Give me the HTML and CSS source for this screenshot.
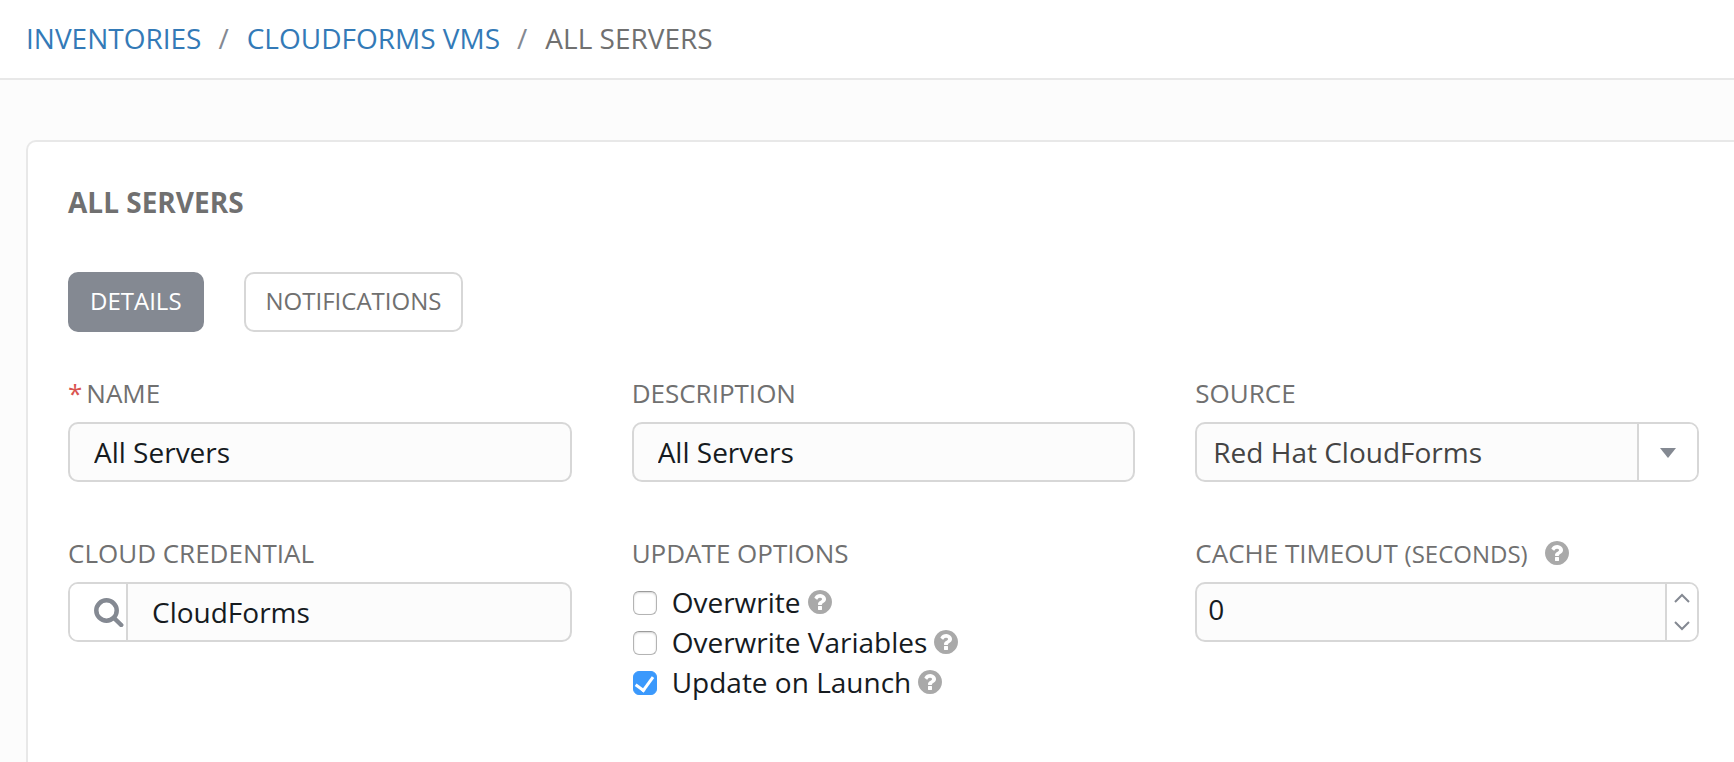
FILE: index.html
```html
<!DOCTYPE html>
<html lang="en">
<head>
<meta charset="utf-8">
<title>All Servers</title>
<link rel="stylesheet" href="styles.css">
</head>
<body>
<svg class="sprite" aria-hidden="true">
  <symbol id="help" viewBox="0 0 1536 1536">
    <path d="M896 1248v-192q0-14-9-23t-23-9H672q-14 0-23 9t-9 23v192q0 14 9 23t23 9h192q14 0 23-9t9-23zm256-672q0-88-55.500-163t-138.500-116-170-41q-243 0-371 213-15 24 8 42l132 100q7 6 19 6 16 0 25-12 53-68 86-92 34-24 86-24 48 0 85.500 26t37.500 59q0 38-20 61t-68 45q-63 28-115.500 86.500T640 892v36q0 14 9 23t23 9h192q14 0 23-9t9-23q0-19 21.500-49.500T972 829q32-18 49-28.500t46-35 44.500-48 28-60.500 12.500-81zm384 192q0 209-103 385.500T1153.500 1433 768 1536t-385.500-103T103 1153.500 0 768t103-385.500T382.500 103 768 0t385.500 103T1433 382.500 1536 768z"/>
  </symbol>
</svg>
<header class="header">
  <nav aria-label="Breadcrumb">
    <ol class="breadcrumb">
      <li class="crumb"><a href="#">INVENTORIES</a></li>
      <li class="crumb"><a href="#">CLOUDFORMS VMS</a></li>
      <li class="crumb" aria-current="page">ALL SERVERS</li>
    </ol>
  </nav>
</header>
<main class="page">
  <section class="panel">
    <h1 class="title">ALL SERVERS</h1>
    <div class="tabs">
      <button class="tab tab-active" type="button">DETAILS</button>
      <button class="tab" type="button">NOTIFICATIONS</button>
    </div>
    <form class="form">
      <div class="field">
        <label class="label" for="name"><span class="required">*</span>NAME</label>
        <div class="control"><input class="input" id="name" type="text" value="All Servers"></div>
      </div>
      <div class="field">
        <label class="label" for="description">DESCRIPTION</label>
        <div class="control"><input class="input" id="description" type="text" value="All Servers"></div>
      </div>
      <div class="field">
        <label class="label" for="source">SOURCE</label>
        <div class="control select-control">
          <select class="select" id="source"><option>Red Hat CloudForms</option></select>
          <span class="select-arrow"><svg width="16" height="10" viewBox="0 0 16 10"><path d="M0 0h16L8 10z"/></svg></span>
        </div>
      </div>
      <div class="field">
        <label class="label" for="credential">CLOUD CREDENTIAL</label>
        <div class="control">
          <button class="lookup" type="button" aria-label="Search credentials">
            <svg width="30" height="30" viewBox="0 0 30 30"><circle cx="12.500" cy="13.500" r="10.200"/><path d="M20 21l7.200 7"/></svg>
          </button>
          <input class="input" id="credential" type="text" value="CloudForms">
        </div>
      </div>
      <fieldset class="field options">
        <legend class="label">UPDATE OPTIONS</legend>
        <div class="option">
          <input class="checkbox" id="overwrite" type="checkbox">
          <label for="overwrite">Overwrite</label>
          <button class="help" type="button" aria-label="Overwrite help"><svg><use href="#help"/></svg></button>
        </div>
        <div class="option">
          <input class="checkbox" id="overwrite-vars" type="checkbox">
          <label for="overwrite-vars">Overwrite Variables</label>
          <button class="help" type="button" aria-label="Overwrite variables help"><svg><use href="#help"/></svg></button>
        </div>
        <div class="option">
          <input class="checkbox" id="update-launch" type="checkbox" checked>
          <label for="update-launch">Update on Launch</label>
          <button class="help" type="button" aria-label="Update on launch help"><svg><use href="#help"/></svg></button>
        </div>
      </fieldset>
      <div class="field">
        <div class="label-row">
          <label class="label" for="timeout">CACHE TIMEOUT <span class="unit">(SECONDS)</span></label>
          <button class="help" type="button" aria-label="Cache timeout help"><svg><use href="#help"/></svg></button>
        </div>
        <div class="control">
          <input class="input number" id="timeout" type="text" inputmode="numeric" value="0">
          <div class="spinner">
            <button class="step" type="button" aria-label="Increase"><svg width="16" height="10" viewBox="0 0 16 10"><path d="M1 9l7-7 7 7"/></svg></button>
            <button class="step" type="button" aria-label="Decrease"><svg width="16" height="10" viewBox="0 0 16 10"><path d="M1 1l7 7 7-7"/></svg></button>
          </div>
        </div>
      </div>
    </form>
  </section>
</main>
</body>
</html>
```
FILE: styles.css
```css
* {
  box-sizing: border-box;
}

body {
  display: flex;
  flex-direction: column;
  min-height: 100vh;
  margin: 0;
  background: #fcfcfc;
  color: #161b1f;
  font: 28px/40px "Open Sans", "Noto Sans", sans-serif;
}

button,
input,
select {
  margin: 0;
  font: inherit;
  color: inherit;
}

button {
  padding: 0;
  border: 0;
  background: none;
  cursor: pointer;
}

.sprite {
  display: none;
}

.header {
  padding: 18px 26px 20px;
  border-bottom: 2px solid #e8e8e8;
  background: #fff;
}

.breadcrumb {
  display: flex;
  margin: 0;
  padding: 0;
  list-style: none;
  color: #707070;
}

.crumb a {
  color: #337ab7;
  text-decoration: none;
}

.crumb + .crumb::before {
  content: "/";
  padding: 0 18px 0 17px;
  color: #848992;
}

.page {
  display: flex;
  flex: 1;
  flex-direction: column;
  padding: 60px 0 0 26px;
}

.panel {
  flex: 1;
  padding: 40px 35px 50px 40px;
  border: 2px solid #e8e8e8;
  border-width: 2px 0 0 2px;
  border-radius: 10px 0 0;
  background: #fff;
}

.title {
  margin: 0 0 50px;
  color: #707070;
  font-size: 28px;
  font-weight: 700;
}

.tabs {
  display: flex;
  gap: 40px;
  margin-bottom: 40px;
}

.tab {
  height: 60px;
  padding: 0 20px 2px;
  border: 2px solid #d7d7d7;
  border-radius: 10px;
  background: #fff;
  color: #707070;
  font-size: 24px;
}

.tab-active {
  border-color: #848992;
  background: #848992;
  color: #fff;
}

.form {
  display: grid;
  grid-template-columns: repeat(3, minmax(0, 1fr));
  gap: 50px 60px;
}

.field {
  min-width: 0;
  margin: 0;
  padding: 0;
  border: 0;
}

.label {
  display: block;
  margin-bottom: 8px;
  padding: 0;
  color: #707070;
  font-size: 26px;
  line-height: 42px;
}

.label-row {
  display: flex;
  gap: 17px;
}

.label-row .help {
  height: 42px;
}

.unit {
  font-size: 24px;
  line-height: 1;
}

.required {
  margin-right: 4px;
  color: #d9534f;
}

.control {
  display: flex;
  height: 60px;
  overflow: hidden;
  border: 2px solid #d7d7d7;
  border-radius: 10px;
  background: #fcfcfc;
}

.input {
  flex: 1;
  min-width: 0;
  padding: 0 24px;
  border: 0;
  outline: 0;
  background: transparent;
}

.number {
  padding: 0 11px 6px;
}

.select-control {
  display: grid;
}

.select {
  grid-area: 1 / 1;
  padding: 0 60px 0 16px;
  border: 0;
  outline: 0;
  appearance: none;
  background: transparent;
  color: #444;
}

.select-arrow {
  grid-area: 1 / 1;
  display: flex;
  align-items: center;
  justify-content: center;
  justify-self: end;
  width: 60px;
  padding-top: 2px;
  border-left: 2px solid #d7d7d7;
  background: #fff;
  fill: #848992;
  pointer-events: none;
}

.lookup {
  display: flex;
  align-items: center;
  justify-content: flex-end;
  width: 58px;
  padding-right: 2px;
  border-right: 2px solid #d7d7d7;
  background: #fff;
}

.lookup svg {
  fill: none;
  stroke: #848992;
  stroke-width: 4.5;
  stroke-linecap: round;
}

.option {
  display: flex;
  align-items: center;
  padding-left: 1px;
}

.option label {
  margin: 0 7px 0 15px;
}

.checkbox {
  display: grid;
  place-content: center;
  width: 24px;
  height: 24px;
  margin-top: 2px;
  border: 1px solid #b4b4b4;
  border-top-color: #9c9c9c;
  border-radius: 6px;
  appearance: none;
  background: #fff;
  box-shadow: inset 0 1px 2px #d4d4d4;
}

.checkbox:checked {
  border-color: #3b99fc;
  background: #3b99fc;
  box-shadow: none;
}

.checkbox:checked::before {
  content: "";
  width: 8px;
  height: 15px;
  margin-bottom: 3px;
  border: solid #fff;
  border-width: 0 3px 3px 0;
  transform: rotate(36deg);
}

.help {
  display: flex;
  align-items: center;
}

.help svg {
  width: 24px;
  height: 24px;
  fill: #a9a9a9;
}

.spinner {
  display: flex;
  flex-direction: column;
  width: 32px;
  border-left: 2px solid #d7d7d7;
  background: #fff;
}

.step {
  display: flex;
  flex: 1;
  align-items: center;
  justify-content: center;
}

.step svg {
  fill: none;
  stroke: #848992;
  stroke-width: 2;
}
```
